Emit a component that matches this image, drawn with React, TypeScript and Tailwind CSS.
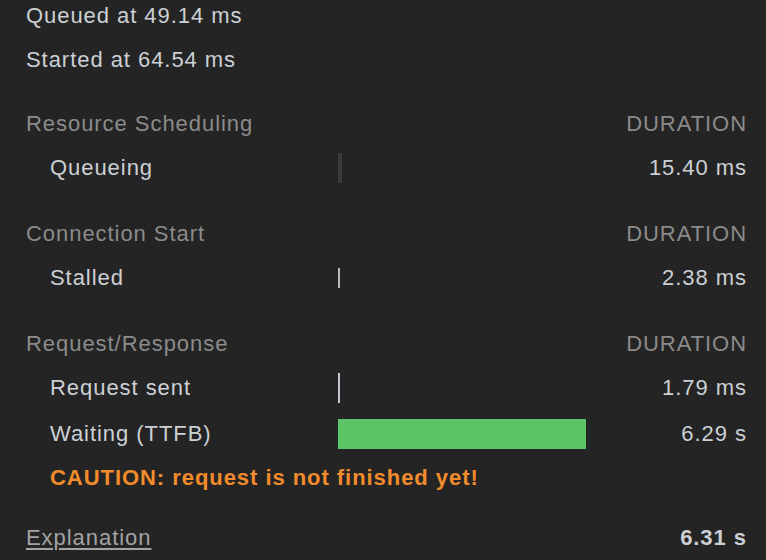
import React from "react";

const font = { fontFamily: '"Liberation Sans", Arial, Helvetica, sans-serif' };

function Row({
  label,
  bar,
  value,
  indent = true,
}: {
  label: React.ReactNode;
  bar?: React.ReactNode;
  value?: React.ReactNode;
  indent?: boolean;
}) {
  return (
    <div className="flex h-[44px] items-center">
      <div className={`w-[312px] shrink-0 ${indent ? "pl-[24px]" : ""}`}>{label}</div>
      <div className="flex h-full flex-1 items-center">{bar}</div>
      <div className="w-[161px] shrink-0 text-right">{value}</div>
    </div>
  );
}

function Header({ title }: { title: string }) {
  return (
    <div className="flex h-[44px] items-center text-[#8b8b8b]">
      <div className="flex-1">{title}</div>
      <div className="text-right">DURATION</div>
    </div>
  );
}

export default function App() {
  return (
    <div
      className="h-[560px] w-[766px] overflow-hidden bg-[#242424] text-[22px] leading-none tracking-[0.95px] text-[#ccd0d5]"
      style={font}
    >
      <div className="-mt-[6px] pl-[26px] pr-[19px]">
        <div className="flex h-[44px] items-center">Queued at 49.14 ms</div>
        <div className="flex h-[44px] items-center">Started at 64.54 ms</div>

        <div className="h-[20px]" />
        <Header title="Resource Scheduling" />
        <Row
          label="Queueing"
          bar={<div className="h-[30px] w-[4px] bg-[#3b3b3b]" />}
          value="15.40 ms"
        />

        <div className="h-[22px]" />
        <Header title="Connection Start" />
        <Row
          label="Stalled"
          bar={<div className="h-[20px] w-[2px] bg-[#bcbcbc]" />}
          value="2.38 ms"
        />

        <div className="h-[22px]" />
        <Header title="Request/Response" />
        <Row
          label="Request sent"
          bar={<div className="h-[30px] w-[2px] bg-[#c2c8cf]" />}
          value="1.79 ms"
        />
        <div className="h-[2px]" />
        <Row
          label="Waiting (TTFB)"
          bar={<div className="h-[30px] w-full bg-[#5ac466]" />}
          value="6.29 s"
        />
        <div className="flex h-[44px] items-center pl-[24px] font-bold text-[#f28b2c]">
          CAUTION: request is not finished yet!
        </div>

        <div className="h-[16px]" />
        <div className="flex h-[44px] items-center">
          <div className="flex-1">
            <span className="text-[#a3a3a3] underline underline-offset-[3px]">Explanation</span>
          </div>
          <div className="text-right font-bold">6.31 s</div>
        </div>
      </div>
    </div>
  );
}
